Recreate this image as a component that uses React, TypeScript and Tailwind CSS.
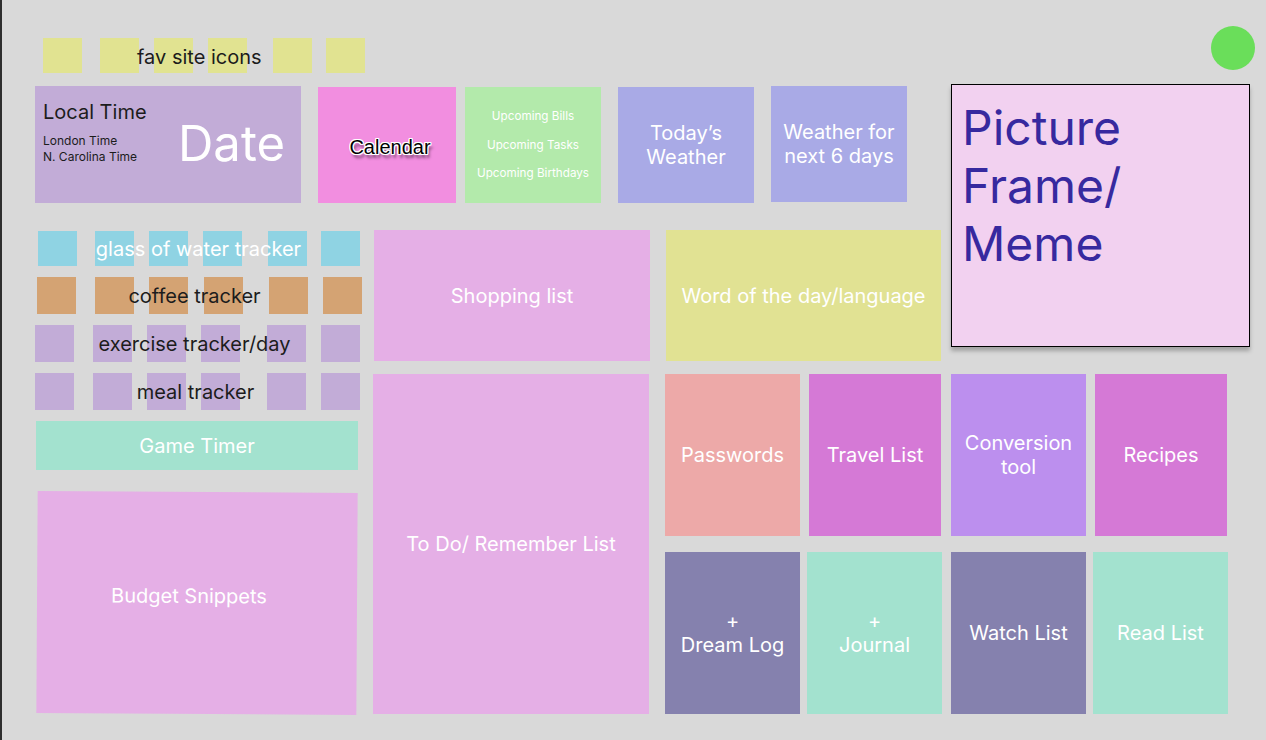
import type { ReactNode } from "react";

// --- Tracker rows: six squares each, nudged to match the sketch -------------
type TrackerRow = {
  label: string;
  color: string;
  height: string;
  top: string;
  slots: string[];
  textClass: string;
};

const trackerRows: TrackerRow[] = [
  {
    label: "glass of water tracker",
    color: "bg-[#8fd3e3]",
    height: "h-[35px]",
    top: "mt-[1px]",
    slots: ["ml-[3px]", "ml-[18px]", "ml-[15px]", "ml-[15px]", "ml-[26px]", "ml-[14px]"],
    textClass: "text-white",
  },
  {
    label: "coffee tracker",
    color: "bg-[#d4a373]",
    height: "h-[37px]",
    top: "mt-[11px]",
    slots: ["ml-[2px]", "ml-[19px]", "ml-[15px]", "ml-[16px]", "ml-[26px]", "ml-[15px]"],
    textClass: "text-[#1c1c1c] pr-[8px]",
  },
  {
    label: "exercise tracker/day",
    color: "bg-[#c2acd7]",
    height: "h-[37px]",
    top: "mt-[11px]",
    slots: ["ml-0", "ml-[19px]", "ml-[15px]", "ml-[15px]", "ml-[27px]", "ml-[15px]"],
    textClass: "text-[#1c1c1c] pr-[8px]",
  },
  {
    label: "meal tracker",
    color: "bg-[#c2acd7]",
    height: "h-[37px]",
    top: "mt-[11px]",
    slots: ["ml-0", "ml-[19px]", "ml-[15px]", "ml-[15px]", "ml-[27px]", "ml-[15px]"],
    textClass: "text-[#1c1c1c] pr-[6px]",
  },
];

const favSlots = ["ml-0", "ml-[18px]", "ml-[15px]", "ml-[15px]", "ml-[26px]", "ml-[14px]"];

function Tile({
  className,
  children,
}: {
  className: string;
  children: ReactNode;
}) {
  return (
    <div
      className={`flex shrink-0 items-center justify-center text-center text-[20px] leading-[24px] text-white ${className}`}
    >
      {children}
    </div>
  );
}

export default function App() {
  return (
    <div className="h-[740px] w-[1266px] overflow-hidden border-l-2 border-[#2e2e2e] bg-[#d9d9d9] pl-[33px] pt-[26px] font-['Inter','Noto_Sans',sans-serif]">
      {/* --- Fav icons + status dot ------------------------------------- */}
      <div className="flex h-[58px] items-start">
        <div className="relative ml-[8px] mt-[12px] flex">
          {favSlots.map((slot, i) => (
            <span className={`h-[35px] w-[39px] bg-[#e1e391] ${slot}`} key={i} />
          ))}
          <span className="absolute inset-y-0 left-[94px] flex items-center pt-[2px] text-[20px] text-[#1c1c1c]">
            fav site icons
          </span>
        </div>
        <span className="ml-auto mr-[11px] h-[44px] w-[44px] rounded-full bg-[#6ade5a]" />
      </div>

      {/* --- Board ---------------------------------------------------------- */}
      <div className="grid grid-cols-[338px_292px_286px_1fr] grid-rows-[146px_144px_340px]">
        {/* top strip */}
        <div className="col-span-3 flex items-start pt-[2px]">
          <div className="flex h-[117px] w-[266px] shrink-0 justify-between bg-[#c2acd7] pl-[8px] pr-[16px] pt-[14px]">
            <div className="text-[#1c1c1c]">
              <div className="text-[20px] leading-[24px]">Local Time</div>
              <div className="mt-[9px] text-[12px] leading-[16px]">London Time</div>
              <div className="text-[12px] leading-[16px]">N. Carolina Time</div>
            </div>
            <div className="-mt-[14px] mb-[3px] self-center text-[49px] leading-none text-white">
              Date
            </div>
          </div>
          <div className="ml-[17px] mt-[1px] flex h-[116px] w-[138px] shrink-0 items-center justify-center bg-[#f28ee0] pl-[6px] pt-[4px]">
            <span className="font-['Liberation_Sans',Arial,sans-serif] text-[20px] text-black [text-shadow:-1px_-1px_0_#fff,1px_-1px_0_#fff,-1px_1px_0_#fff,1px_1px_0_#fff,0_-1px_0_#fff,0_1px_0_#fff,-1px_0_0_#fff,1px_0_0_#fff,2px_4px_3px_rgba(0,0,0,0.55)]">
              Calendar
            </span>
          </div>
          <div className="ml-[9px] mt-[1px] flex h-[116px] w-[136px] shrink-0 flex-col items-center justify-center bg-[#b3eaab] text-[11.7px] leading-[28.5px] text-white">
            <span>Upcoming Bills</span>
            <span>Upcoming Tasks</span>
            <span>Upcoming Birthdays</span>
          </div>
          <Tile className="ml-[17px] mt-[1px] h-[116px] w-[136px] bg-[#a9aae6]">
            Today’s
            <br />
            Weather
          </Tile>
          <Tile className="ml-[17px] h-[116px] w-[136px] bg-[#a9aae6]">
            Weather for
            <br />
            next 6 days
          </Tile>
        </div>

        {/* picture frame */}
        <div className="col-start-4 row-span-2 row-start-1 h-[263px] w-[299px] self-start border border-black bg-[#f2d1f0] pl-[10px] pt-[14px] text-[48px] leading-[58px] text-[#37299f] shadow-[0_4px_4px_rgba(0,0,0,0.25)]">
          Picture
          <br />
          Frame/
          <br />
          Meme
        </div>

        {/* trackers column */}
        <div className="col-start-1 row-span-2 row-start-2 flex flex-col">
          {trackerRows.map((row) => (
            <div className={`relative flex ${row.top} ${row.height}`} key={row.label}>
              {row.slots.map((slot, i) => (
                <span className={`h-full w-[39px] ${row.color} ${slot}`} key={i} />
              ))}
              <span
                className={`absolute inset-0 flex w-[327px] items-center justify-center text-[20px] ${row.textClass}`}
              >
                {row.label}
              </span>
            </div>
          ))}
          <Tile className="ml-[1px] mt-[11px] h-[49px] w-[322px] bg-[#a3e2cf]">
            Game Timer
          </Tile>
          <Tile className="ml-[2px] mt-[22px] h-[222px] w-[320px] rotate-[0.35deg] bg-[#e5afe6] pb-[14px] pr-[16px]">
            Budget Snippets
          </Tile>
        </div>

        {/* lists */}
        <Tile className="col-start-2 row-start-2 ml-[1px] h-[131px] w-[276px] bg-[#e5afe6]">
          Shopping list
        </Tile>
        <Tile className="col-start-2 row-start-3 h-[340px] w-[276px] bg-[#e5afe6]">
          To Do/ Remember List
        </Tile>

        <Tile className="col-start-3 row-start-2 ml-[1px] h-[131px] w-[275px] bg-[#e1e293]">
          Word of the day/language
        </Tile>

        {/* small tiles */}
        <div className="col-span-2 col-start-3 row-start-3 flex flex-col gap-[16px]">
          <div className="flex h-[162px]">
            <Tile className="h-full w-[135px] bg-[#eda9a8]">Passwords</Tile>
            <Tile className="ml-[9px] h-full w-[132px] bg-[#d579d6]">Travel List</Tile>
            <Tile className="ml-[10px] h-full w-[135px] bg-[#bc8fee]">
              Conversion
              <br />
              tool
            </Tile>
            <Tile className="ml-[9px] h-full w-[132px] bg-[#d579d6]">Recipes</Tile>
          </div>
          <div className="flex h-[162px]">
            <Tile className="h-full w-[135px] bg-[#8581ae]">
              +
              <br />
              Dream Log
            </Tile>
            <Tile className="ml-[7px] h-full w-[135px] bg-[#a3e2cf]">
              +
              <br />
              Journal
            </Tile>
            <Tile className="ml-[9px] h-full w-[135px] bg-[#8581ae]">Watch List</Tile>
            <Tile className="ml-[7px] h-full w-[135px] bg-[#a3e2cf]">Read List</Tile>
          </div>
        </div>
      </div>
    </div>
  );
}
